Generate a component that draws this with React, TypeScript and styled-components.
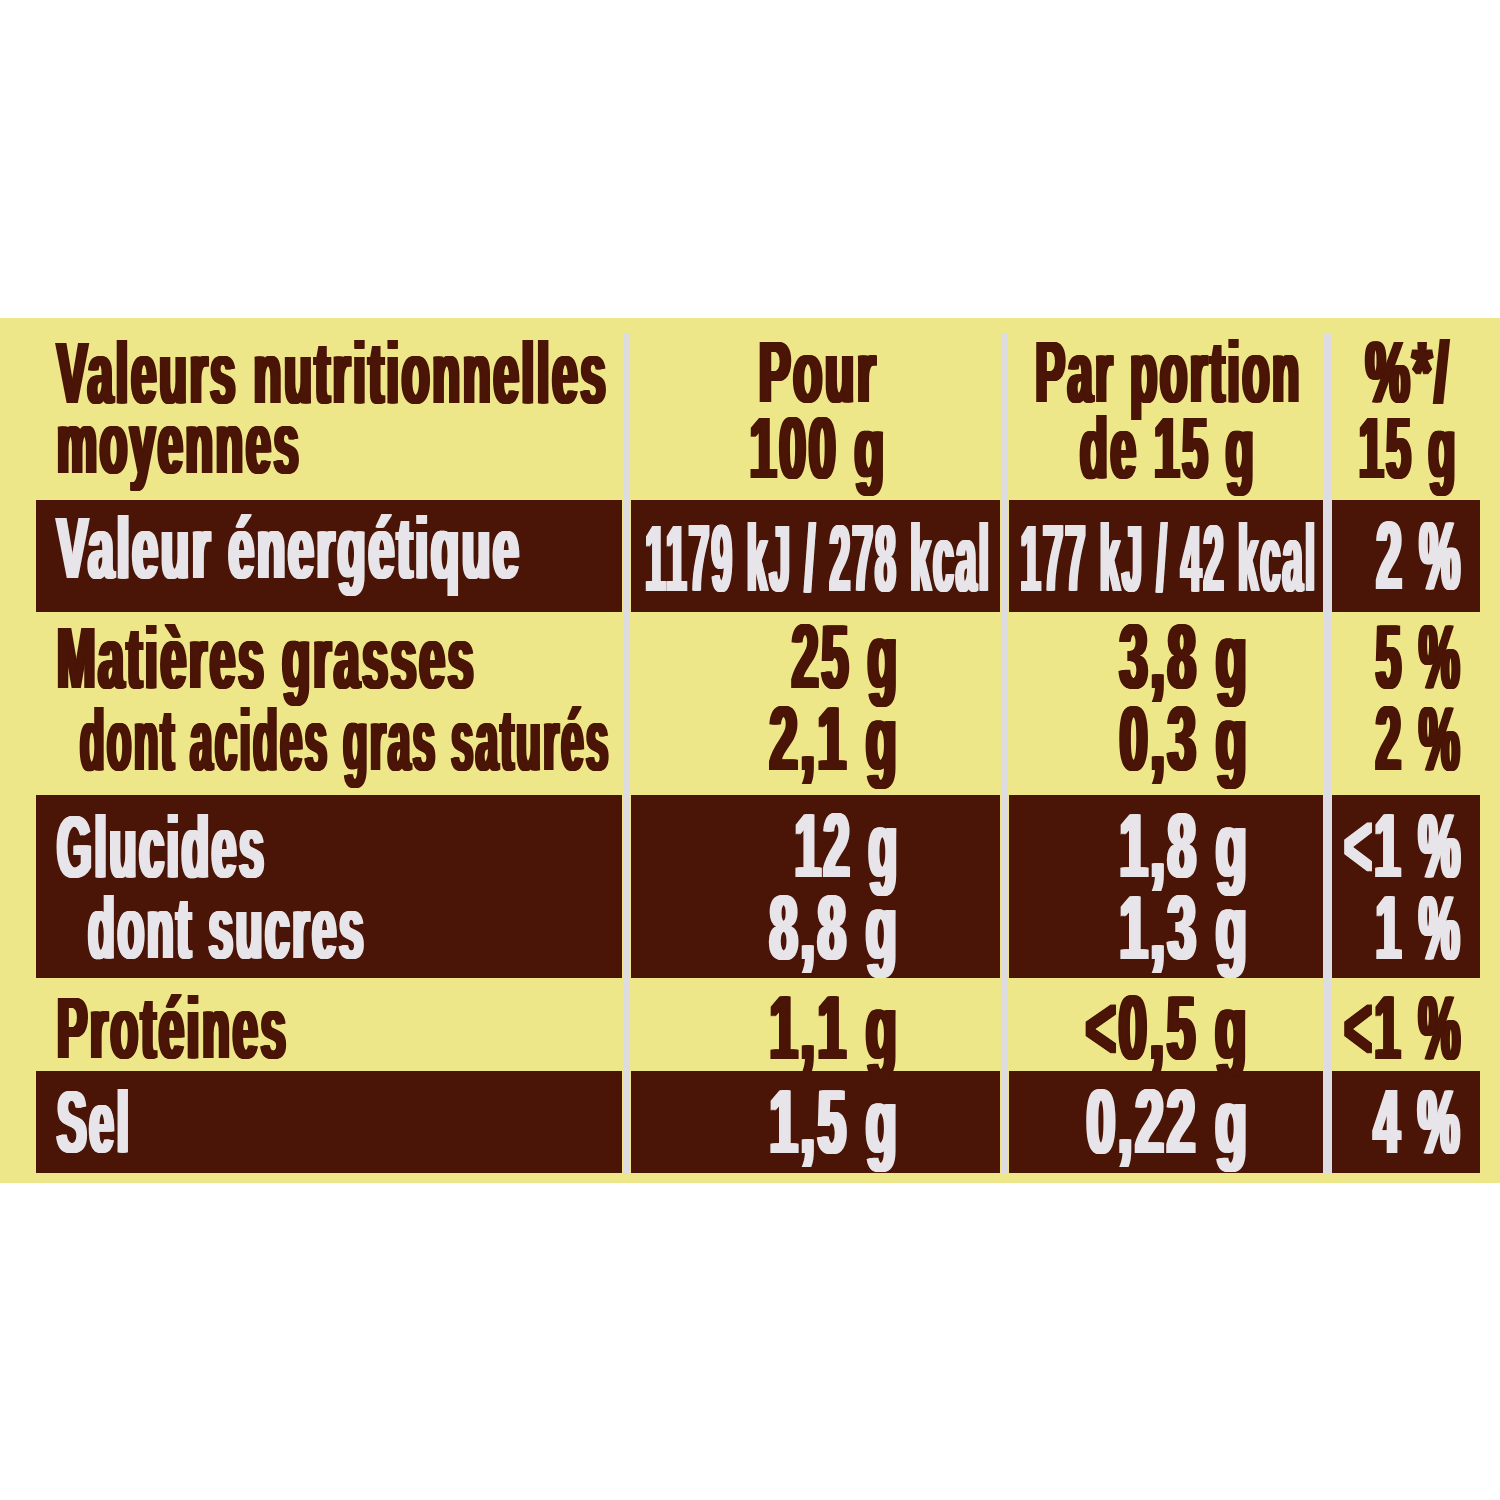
import React, { useLayoutEffect, useRef, useState } from 'react';
import styled, { createGlobalStyle } from 'styled-components';

const BROWN = '#4a1506';
const YELLOW = '#eee789';
const LIGHT = '#e7e5e9';
const RULE = '#dcdce2';

const SMEAR = 0.048; // em, horizontal thickening on each side
const TRACK = 0.06; // em, letter spacing

type Align = 'start' | 'center' | 'end';

const justify: Record<Align, string> = {
  start: 'flex-start',
  center: 'center',
  end: 'flex-end',
};

const origin: Record<Align, string> = {
  start: 'left',
  center: 'center',
  end: 'right',
};

const Global = createGlobalStyle`
  html, body { margin: 0; padding: 0; background: #ffffff; }
  body { font-family: "Liberation Sans", Arial, sans-serif; }
`;

const Page = styled.main`
  width: 1500px;
  height: 1500px;
  padding-top: 318px;
  box-sizing: border-box;
  background: #ffffff;
  overflow: hidden;
`;

const Band = styled.section`
  background: ${YELLOW};
  padding: 15px 20px 10px 36px;
`;

const Table = styled.div`
  display: grid;
  grid-template-columns: 586px 9px 369px 9px 314px 9px 148px;
  grid-template-rows: 167px 112px 183px 183px 93px 102px;
`;

const Rule = styled.div<{ $col: number }>`
  grid-column: ${(p) => p.$col};
  grid-row: 1 / -1;
  justify-self: center;
  width: 7px;
  background: ${RULE};
`;

const Cell = styled.div<{ $dark: boolean; $pt: number; $pl: number; $pr: number }>`
  background: ${(p) => (p.$dark ? BROWN : 'transparent')};
  color: ${(p) => (p.$dark ? LIGHT : BROWN)};
  padding: ${(p) => p.$pt}px ${(p) => p.$pr}px 0 ${(p) => p.$pl}px;
  display: flex;
  flex-direction: column;
  min-width: 0;
`;

const Line = styled.div<{ $lh: number; $align: Align; $indent: number }>`
  display: flex;
  justify-content: ${(p) => justify[p.$align]};
  height: ${(p) => p.$lh}px;
  line-height: ${(p) => p.$lh}px;
  padding-left: ${(p) => p.$indent}px;
  white-space: nowrap;
`;

const Txt = styled.span<{ $size: number; $align: Align }>`
  flex: none;
  display: inline-block;
  font-family: "Liberation Sans", Arial, sans-serif;
  font-weight: 700;
  font-size: ${(p) => p.$size}px;
  letter-spacing: ${TRACK}em;
  margin-right: -${TRACK}em;
  transform-origin: ${(p) => origin[p.$align]} center;
  text-shadow:
    ${SMEAR / 3}em 0 0 currentColor,
    -${SMEAR / 3}em 0 0 currentColor,
    ${(2 * SMEAR) / 3}em 0 0 currentColor,
    -${(2 * SMEAR) / 3}em 0 0 currentColor,
    ${SMEAR}em 0 0 currentColor,
    -${SMEAR}em 0 0 currentColor;
`;

type FitProps = { text: string; width: number; size: number; align: Align };

function FitText({ text, width, size, align }: FitProps) {
  const ref = useRef<HTMLSpanElement>(null);
  const [sx, setSx] = useState(0.55);

  useLayoutEffect(() => {
    const measure = () => {
      const el = ref.current;
      if (!el) return;
      const natural = el.offsetWidth - TRACK * size + 2 * SMEAR * size;
      if (natural > 0) setSx(width / natural);
    };
    measure();
    const fonts = (document as any).fonts;
    if (fonts && fonts.ready) fonts.ready.then(measure);
  }, [text, width, size]);

  return (
    <Txt ref={ref} $size={size} $align={align} style={{ transform: `scaleX(${sx})` }}>
      {text}
    </Txt>
  );
}

type TextLine = { t: string; w: number; indent?: number };
type CellSpec = {
  pt: number;
  lh: number;
  align: Align;
  size: number;
  pl?: number;
  pr?: number;
  lines: TextLine[];
};
type RowSpec = { dark: boolean; cells: CellSpec[] };

const L = (t: string, w: number, indent = 0): TextLine => ({ t, w, indent });

const label = (pt: number, lines: TextLine[], lh = 82): CellSpec => ({
  pt,
  lh,
  align: 'start',
  size: 87,
  pl: 21,
  lines,
});

const grams = (pt: number, pr: number, lines: TextLine[]): CellSpec => ({
  pt,
  lh: 82,
  align: 'end',
  size: 91,
  pr,
  lines,
});

const head = (lines: TextLine[]): CellSpec => ({
  pt: 1,
  lh: 76,
  align: 'center',
  size: 87,
  lines,
});

const P2 = 106;
const P3 = 79;
const P4 = 23;

const ROWS: RowSpec[] = [
  {
    dark: false,
    cells: [
      label(5, [L('Valeurs nutritionnelles', 553), L('moyennes', 246)], 70),
      head([L('Pour', 121), L('100 g', 139)]),
      head([L('Par portion', 268), L('de 15 g', 178)]),
      head([L('%*/', 87), L('15 g', 101)]),
    ],
  },
  {
    dark: true,
    cells: [
      label(7, [L('Valeur énergétique', 466)]),
      { pt: 18, lh: 82, align: 'center', size: 94, lines: [L('1179 kJ / 278 kcal', 347)] },
      { pt: 18, lh: 82, align: 'center', size: 94, lines: [L('177 kJ / 42 kcal', 298)] },
      { pt: 15, lh: 82, align: 'end', size: 96, pr: P4, lines: [L('2 %', 88)] },
    ],
  },
  {
    dark: false,
    cells: [
      label(5, [L('Matières grasses', 421), L('dont acides gras saturés', 532, 23)]),
      grams(4, P2, [L('25 g', 110), L('2,1 g', 132)]),
      grams(4, P3, [L('3,8 g', 132), L('0,3 g', 132)]),
      grams(4, P4, [L('5 %', 88), L('2 %', 88)]),
    ],
  },
  {
    dark: true,
    cells: [
      label(11, [L('Glucides', 211), L('dont sucres', 280, 31)], 81),
      grams(10, P2, [L('12 g', 107), L('8,8 g', 132)]),
      grams(10, P3, [L('1,8 g', 132), L('1,3 g', 132)]),
      grams(10, P4, [L('<1 %', 120), L('1 %', 88)]),
    ],
  },
  {
    dark: false,
    cells: [
      label(9, [L('Protéines', 233)]),
      grams(9, P2, [L('1,1 g', 132)]),
      grams(9, P3, [L('<0,5 g', 165)]),
      grams(9, P4, [L('<1 %', 120)]),
    ],
  },
  {
    dark: true,
    cells: [
      label(10, [L('Sel', 76)]),
      grams(10, P2, [L('1,5 g', 132)]),
      grams(10, P3, [L('0,22 g', 165)]),
      grams(10, P4, [L('4 %', 90)]),
    ],
  },
];

export default function App() {
  return (
    <>
      <Global />
      <Page>
        <Band>
          <Table>
            <Rule $col={2} />
            <Rule $col={4} />
            <Rule $col={6} />
            {ROWS.map((row, ri) =>
              row.cells.map((c, ci) => (
                <Cell key={`${ri}-${ci}`} $dark={row.dark} $pt={c.pt} $pl={c.pl ?? 0} $pr={c.pr ?? 0}>
                  {c.lines.map((ln, li) => (
                    <Line key={li} $lh={c.lh} $align={c.align} $indent={ln.indent ?? 0}>
                      <FitText text={ln.t} width={ln.w} size={c.size} align={c.align} />
                    </Line>
                  ))}
                </Cell>
              ))
            )}
          </Table>
        </Band>
      </Page>
    </>
  );
}
